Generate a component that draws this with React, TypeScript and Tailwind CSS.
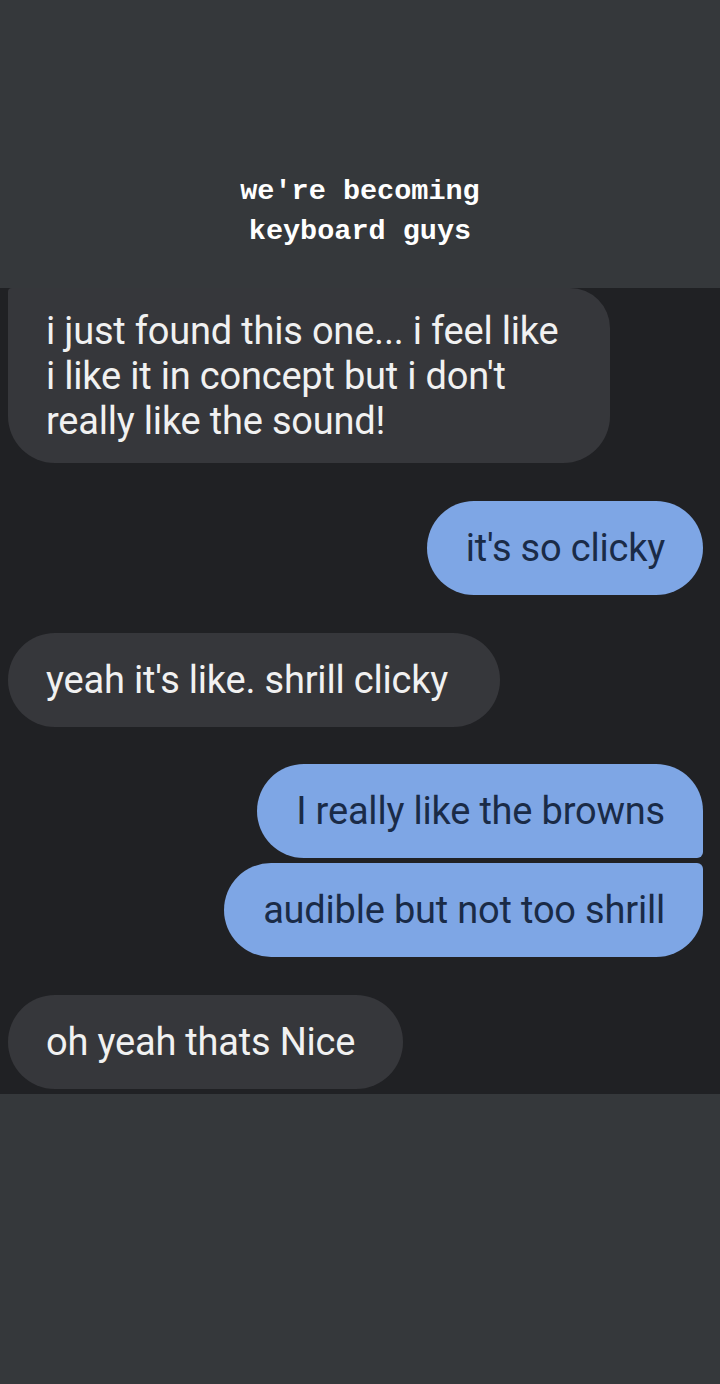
const incoming = 'bg-[#36373b] text-[#f1f1f1]'
const outgoing = 'bg-[#7ea6e5] text-[#1a2b47]'

export default function App() {
  return (
    <main className="w-[720px] h-[1384px] flex flex-col bg-[#35383b] font-['Roboto',sans-serif] overflow-hidden">
      <header className="h-[288px] shrink-0 flex flex-col items-center pt-[172px]">
        <p className="font-['Liberation_Mono',monospace] font-bold text-white text-[28.5px] leading-[40px] text-center">
          we're becoming
          <br />
          keyboard guys
        </p>
      </header>

      <section className="h-[806px] shrink-0 bg-[#202124] flex flex-col overflow-hidden">
        <div className={`${incoming} ml-[8px] w-[602px] rounded-[47px] rounded-tl-[4px] rounded-tr-[40px] pl-[38px] pt-[21px] pb-[19px] text-[38px] leading-[45px] tracking-[-0.2px]`}>
          i just found this one... i feel like
          <br />
          i like it in concept but i don't
          <br />
          really like the sound!
        </div>

        <div className={`${outgoing} mt-[38px] self-end mr-[17px] w-[276px] h-[94px] rounded-full flex items-center justify-end pr-[38px] text-[38px] tracking-[-0.2px]`}>
          it's so clicky
        </div>

        <div className={`${incoming} mt-[38px] ml-[8px] w-[492px] h-[94px] rounded-full flex items-center pl-[38px] text-[38px] tracking-[-0.2px]`}>
          yeah it's like. shrill clicky
        </div>

        <div className="mt-[37px] self-end mr-[17px] flex flex-col items-end gap-[5px]">
          <div className={`${outgoing} w-[446px] h-[94px] rounded-[47px] rounded-br-[6px] flex items-center justify-end pr-[38px] text-[38px] tracking-[-0.2px]`}>
            I really like the browns
          </div>
          <div className={`${outgoing} w-[479px] h-[94px] rounded-[47px] rounded-tr-[6px] flex items-center justify-end pr-[38px] text-[38px] tracking-[-0.2px]`}>
            audible but not too shrill
          </div>
        </div>

        <div className={`${incoming} mt-[38px] ml-[8px] w-[395px] h-[94px] rounded-full flex items-center pl-[38px] text-[38px] tracking-[-0.2px]`}>
          oh yeah thats Nice
        </div>
      </section>

      <footer className="flex-1 bg-[#35383b]" />
    </main>
  )
}
